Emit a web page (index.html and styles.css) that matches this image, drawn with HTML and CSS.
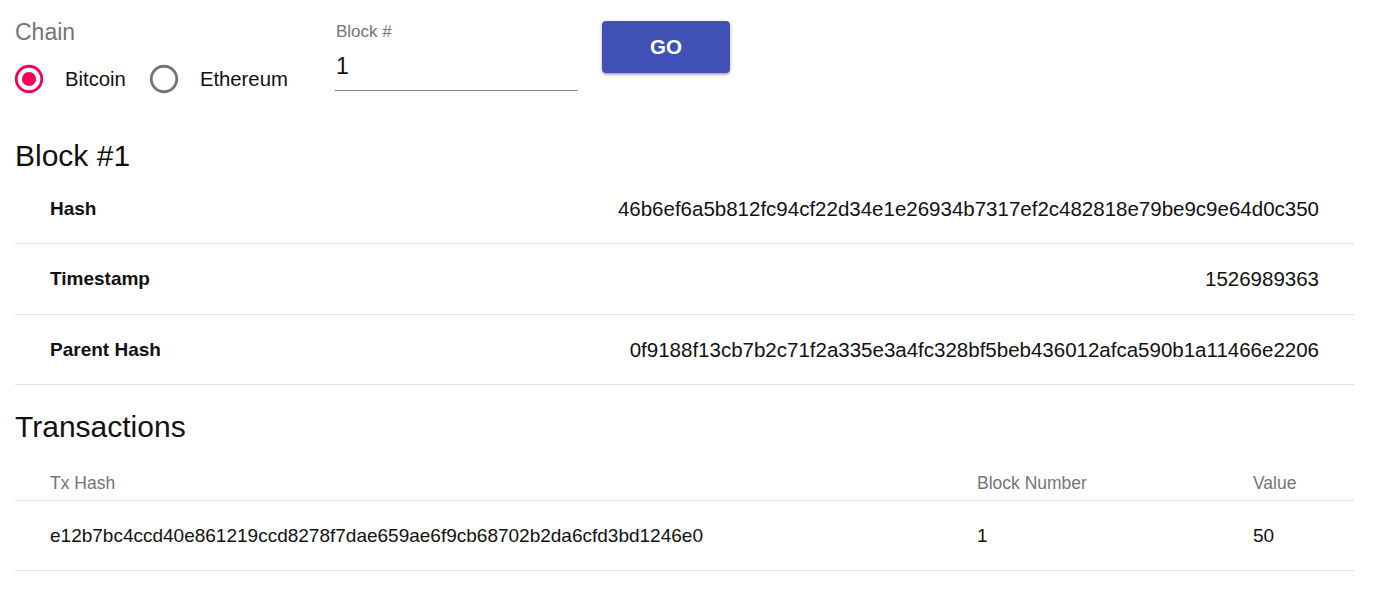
FILE: index.html
```html
<!DOCTYPE html>
<html>
<head>
<meta charset="utf-8">
<link rel="stylesheet" href="styles.css">
</head>
<body>
<div class="page">
  <div class="controls">
    <div class="chain">
      <div class="chain-label">Chain</div>
      <div class="radios">
        <label class="radio">
          <svg class="radio-icon checked" viewBox="0 0 24 24" width="34" height="34"><circle cx="12" cy="12" r="9" fill="none" stroke="currentColor" stroke-width="2"/><circle cx="12" cy="12" r="5" fill="currentColor"/></svg>
          <span class="radio-text">Bitcoin</span>
        </label>
        <label class="radio">
          <svg class="radio-icon" viewBox="0 0 24 24" width="34" height="34"><circle cx="12" cy="12" r="9" fill="none" stroke="currentColor" stroke-width="2"/></svg>
          <span class="radio-text">Ethereum</span>
        </label>
      </div>
    </div>
    <div class="field">
      <div class="field-label">Block #</div>
      <div class="field-input">1</div>
    </div>
    <button class="go">GO</button>
  </div>

  <h2 class="heading first">Block #1</h2>
  <div class="details">
    <div class="drow"><span class="dlabel">Hash</span><span class="dvalue">46b6ef6a5b812fc94cf22d34e1e26934b7317ef2c482818e79be9c9e64d0c350</span></div>
    <div class="drow"><span class="dlabel">Timestamp</span><span class="dvalue">1526989363</span></div>
    <div class="drow"><span class="dlabel">Parent Hash</span><span class="dvalue">0f9188f13cb7b2c71f2a335e3a4fc328bf5beb436012afca590b1a11466e2206</span></div>
  </div>

  <h2 class="heading">Transactions</h2>
  <div class="txtable">
    <div class="trow thead"><span class="c1">Tx Hash</span><span>Block Number</span><span>Value</span></div>
    <div class="trow tbody"><span class="c1">e12b7bc4ccd40e861219ccd8278f7dae659ae6f9cb68702b2da6cfd3bd1246e0</span><span>1</span><span>50</span></div>
  </div>
</div>
</body>
</html>
```

FILE: styles.css
```css
html, body {
  margin: 0;
  padding: 0;
  background: #ffffff;
}
body {
  font-family: "Liberation Sans", Arial, Helvetica, sans-serif;
  color: #111111;
}
.page {
  margin-left: 15px;
  width: 1339px;
}
.controls {
  display: flex;
  align-items: flex-start;
}
.chain {
  margin-top: 19px;
  width: 320px;
}
.chain-label {
  font-size: 23px;
  line-height: 26px;
  color: #757575;
}
.radios {
  display: flex;
  align-items: center;
  margin-top: 17px;
  height: 34px;
}
.radio {
  display: flex;
  align-items: center;
  margin-left: -3px;
  margin-right: 24px;
}
.radio-icon {
  color: #757575;
  display: block;
}
.radio-icon.checked {
  color: #f50057;
}
.radio-text {
  font-size: 20.3px;
  margin-left: 19px;
  color: #111111;
}
.field {
  margin-top: 22px;
  width: 243px;
}
.field-label {
  font-size: 17px;
  line-height: 20px;
  color: #757575;
  padding-left: 1px;
}
.field-input {
  margin-top: 11px;
  font-size: 23px;
  line-height: 26px;
  padding-left: 1px;
  padding-bottom: 11px;
  border-bottom: 1px solid #8c8c8c;
  color: #111111;
}
.go {
  margin-top: 21px;
  margin-left: 24px;
  width: 128px;
  height: 52px;
  border: none;
  border-radius: 4px;
  background: #3f51b5;
  color: #ffffff;
  font-family: "Liberation Sans", Arial, sans-serif;
  font-size: 20.5px;
  font-weight: bold;
  box-shadow: 0 1px 5px rgba(0,0,0,0.2), 0 2px 2px rgba(0,0,0,0.14), 0 3px 1px -2px rgba(0,0,0,0.12);
  padding: 0;
}
.heading {
  margin: 25px 0 0 0;
  font-size: 30px;
  line-height: 34px;
  font-weight: normal;
  color: #111111;
}
.heading.first {
  margin-top: 43px;
  padding-bottom: 1px;
}
.drow {
  display: flex;
  justify-content: space-between;
  align-items: center;
  height: 70px;
  box-sizing: border-box;
  border-bottom: 1px solid #e0e0e0;
  padding: 0 35px;
}
.drow + .drow {
  height: 71px;
}
.drow + .drow + .drow {
  height: 70px;
}
.dlabel {
  font-size: 19px;
  font-weight: bold;
}
.dvalue {
  font-size: 20.5px;
}
.trow {
  display: grid;
  grid-template-columns: 962px 276px 1fr;
  border-bottom: 1px solid #e0e0e0;
}
.trow .c1 {
  padding-left: 35px;
}
.thead {
  height: 56px;
  align-items: end;
  font-size: 17.5px;
  color: #757575;
}
.thead span {
  line-height: 20px;
  padding-bottom: 7px;
}
.tbody {
  height: 69px;
  align-items: center;
  font-size: 19px;
  color: #111111;
}
```
